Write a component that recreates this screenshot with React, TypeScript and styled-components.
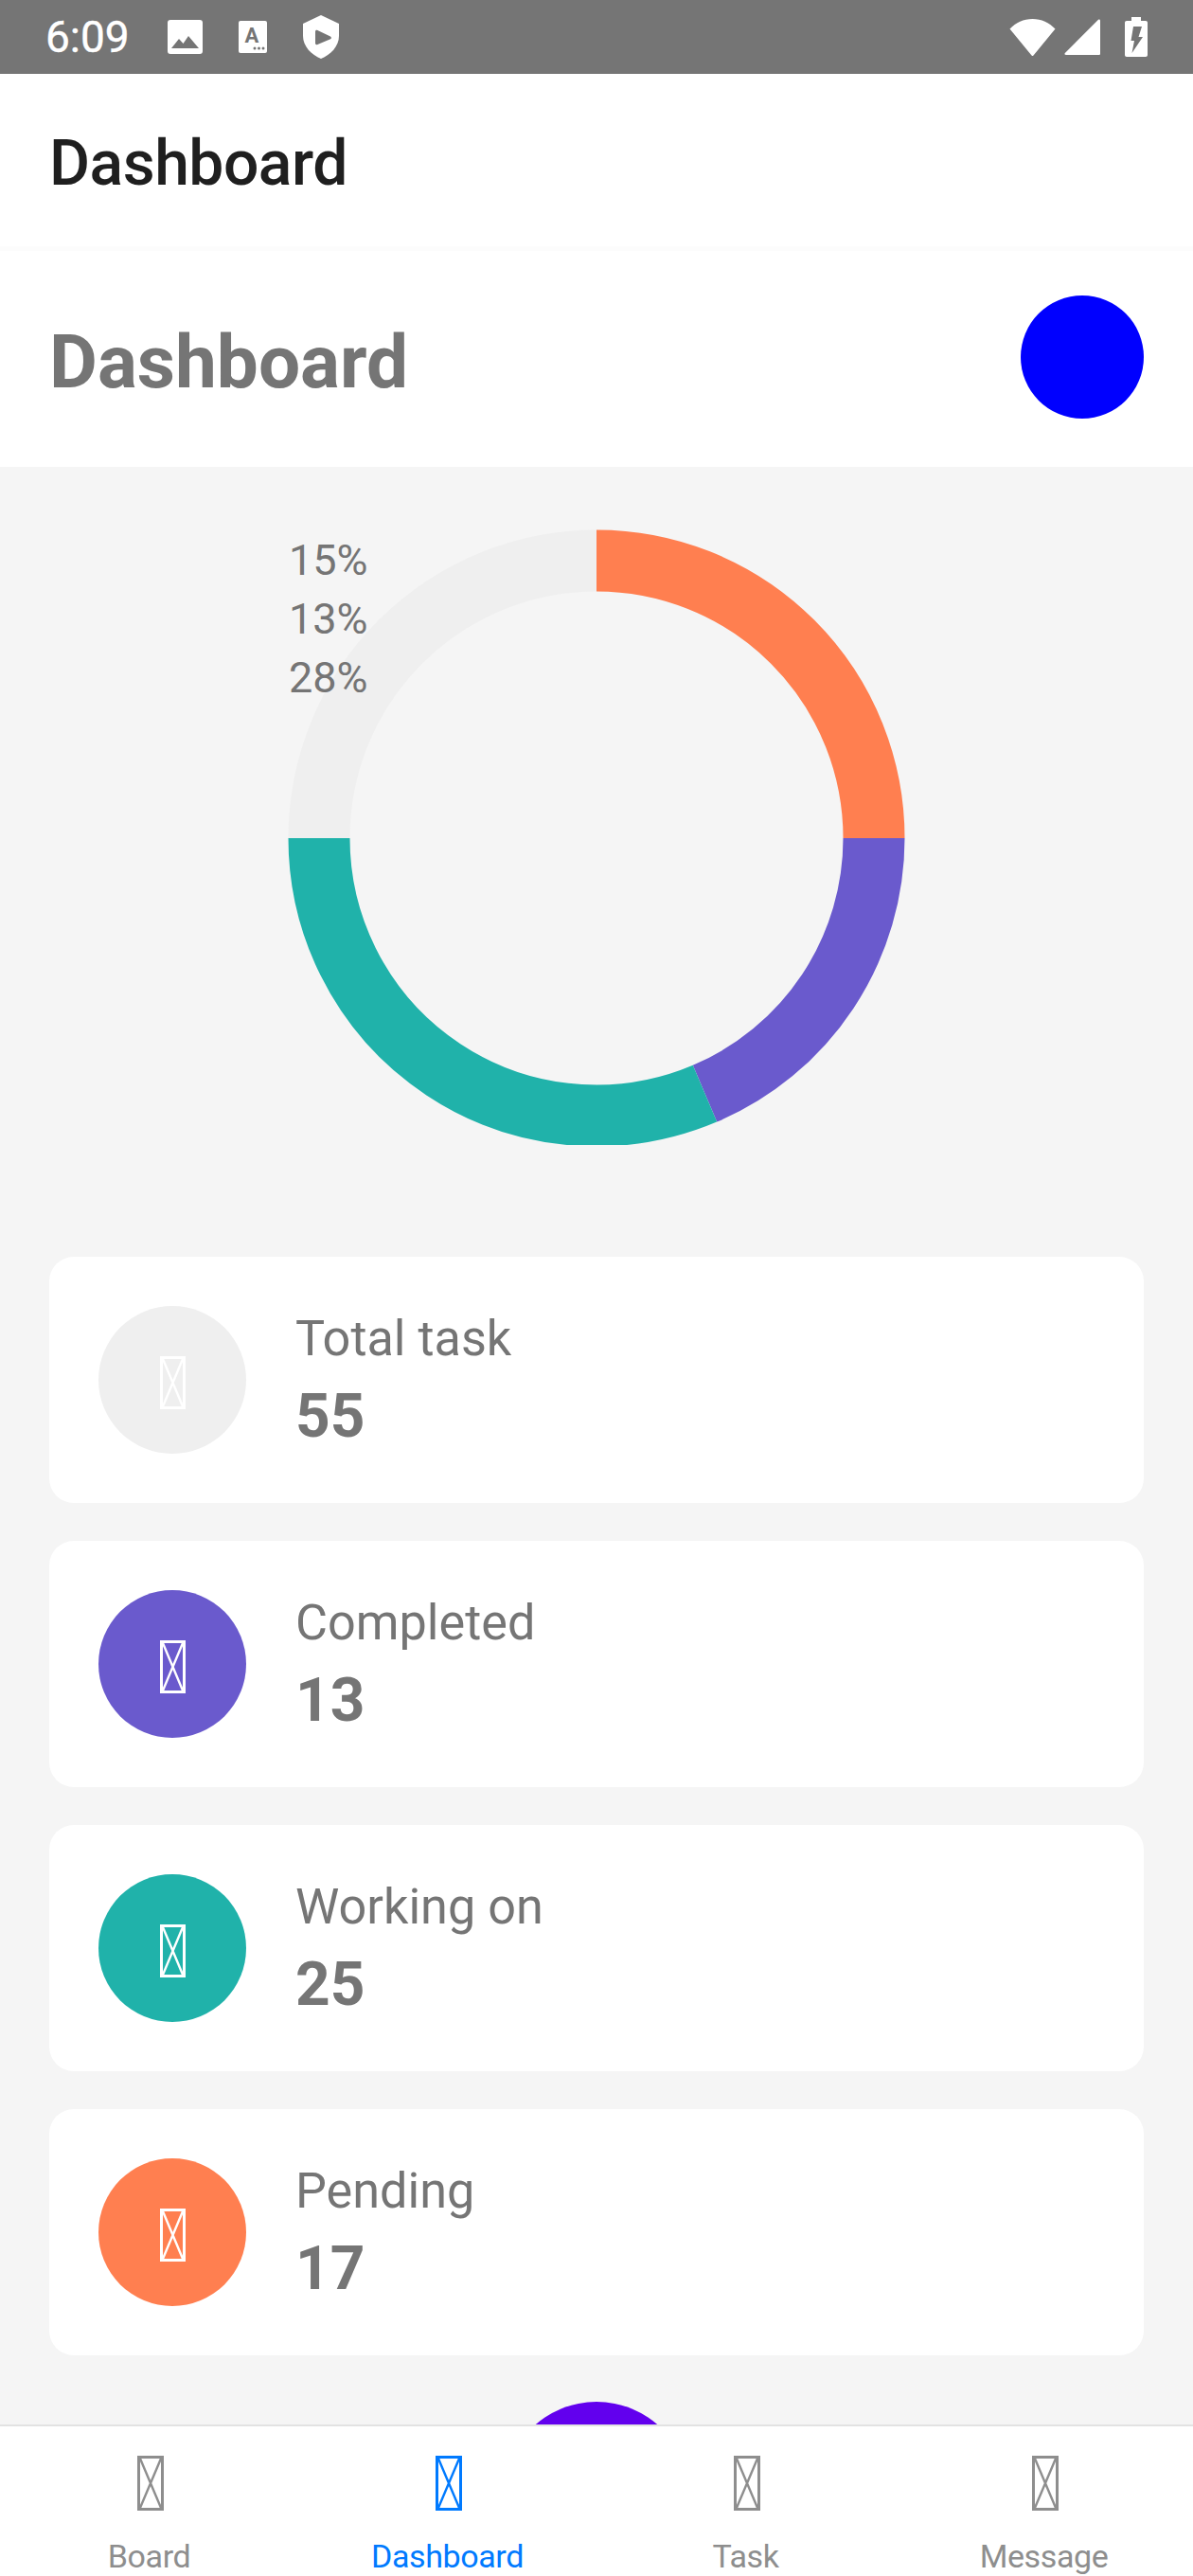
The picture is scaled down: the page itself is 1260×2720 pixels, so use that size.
import React from "react";
import styled, { createGlobalStyle } from "styled-components";

const GlobalStyle = createGlobalStyle`
  html, body { margin: 0; padding: 0; background: #fff; }
  body { font-family: Roboto, "Liberation Sans", sans-serif; }
  * { box-sizing: border-box; }
`;

const Screen = styled.div`
  width: 1260px;
  height: 2720px;
  display: flex;
  flex-direction: column;
  overflow: hidden;
  background: #f5f5f5;
`;

const StatusBar = styled.div`
  height: 78px;
  flex: none;
  display: flex;
  align-items: center;
  padding: 0 48px;
  background: #757575;
  color: #fff;
`;

const Time = styled.span`
  font-size: 46px;
  line-height: 78px;
  width: 87px;
  margin-right: 42px;
  -webkit-text-stroke: 0.4px #fff;
`;

const StatusIcons = styled.div`
  display: flex;
  align-items: center;
  gap: 38px;
`;

const SystemIcons = styled.div`
  margin-left: auto;
  display: flex;
  align-items: center;
  gap: 9px;
`;

const BatteryIcon = styled.svg`
  margin-left: 17px;
  margin-top: -1px;
`;

const AppHeader = styled.header`
  height: 182px;
  flex: none;
  display: flex;
  align-items: center;
  padding: 7px 0 0 52px;
  background: #fff;
`;

const AppTitle = styled.h1`
  margin: 0;
  font-size: 66px;
  font-weight: 500;
  letter-spacing: -0.5px;
  color: #1f1f1f;
  line-height: 80px;
`;

const HeaderShadow = styled.div`
  height: 5px;
  flex: none;
  background: #fcfcfc;
`;

const Hero = styled.section`
  height: 228px;
  flex: none;
  display: flex;
  align-items: center;
  justify-content: space-between;
  padding: 0 52px;
  background: #fff;
`;

const HeroTitle = styled.h2`
  margin: 6px 0 0;
  font-size: 78.3px;
  font-weight: 700;
  color: #757575;
  line-height: 90px;
`;

const Avatar = styled.div`
  width: 130px;
  height: 130px;
  margin-bottom: 4px;
  border-radius: 50%;
  background: #0000ff;
`;

const Main = styled.main`
  position: relative;
  flex: 1;
  min-height: 0;
  overflow: hidden;
`;

const ChartBox = styled.div`
  position: relative;
  width: 652px;
  height: 650px;
  margin: 66px auto 118px;
  overflow: hidden;
`;

const Donut = styled.svg`
  display: block;
`;

const Percentages = styled.div`
  position: absolute;
  left: 1px;
  top: 2px;
  display: flex;
  flex-direction: column;
  font-size: 45px;
  line-height: 62px;
  color: #757575;
`;

const CardList = styled.div`
  display: flex;
  flex-direction: column;
  gap: 40px;
  padding: 0 52px;
`;

const Card = styled.article`
  height: 260px;
  display: flex;
  align-items: center;
  gap: 52px;
  padding-left: 52px;
  border-radius: 26px;
  background: #fff;
`;

const CardBadge = styled.div<{ $color: string }>`
  width: 156px;
  height: 156px;
  flex: none;
  display: flex;
  align-items: center;
  justify-content: center;
  border-radius: 50%;
  background: ${(p) => p.$color};
  color: #fff;
`;

const CardGlyph = styled.span`
  display: flex;
  margin-top: 6px;
`;

const CardText = styled.div`
  display: flex;
  flex-direction: column;
  padding-bottom: 3px;
  color: #757575;
`;

const CardLabel = styled.span`
  font-size: 52.2px;
  line-height: 80px;
`;

const CardValue = styled.strong`
  font-size: 64px;
  font-weight: 700;
  line-height: 83px;
`;

const Fab = styled.div`
  position: absolute;
  left: 532px;
  bottom: -172px;
  width: 196px;
  height: 196px;
  border-radius: 50%;
  background: #6200ee;
`;

const TabBar = styled.nav`
  height: 160px;
  flex: none;
  display: grid;
  grid-template-columns: repeat(4, 1fr);
  border-top: 2px solid #e2e2e2;
  background: #fff;
`;

const Tab = styled.div<{ $active?: boolean }>`
  display: flex;
  flex-direction: column;
  align-items: center;
  padding: 31px 0 0 2px;
  color: ${(p) => (p.$active ? "#007aff" : "#8e8e8e")};
`;

const TabLabel = styled.span`
  margin: 28px 0 0 -2px;
  font-size: 34px;
  letter-spacing: -0.4px;
  line-height: 41px;
`;

const Tofu = ({ width, height, stroke }: { width: number; height: number; stroke: number }) => {
  const i = stroke / 2;
  return (
    <svg width={width} height={height} viewBox={`0 0 ${width} ${height}`} fill="none" stroke="currentColor" strokeWidth={stroke}>
      <rect x={i} y={i} width={width - stroke} height={height - stroke} />
      <path d={`M${stroke} ${stroke}L${width - stroke} ${height - stroke}M${width - stroke} ${stroke}L${stroke} ${height - stroke}`} strokeWidth={stroke * 0.8} />
    </svg>
  );
};

const R = 293;
const CX = 326;
const CY = 326;
const polar = (deg: number) => {
  const a = ((deg - 90) * Math.PI) / 180;
  return [CX + R * Math.cos(a), CY + R * Math.sin(a)];
};
const arc = (from: number, to: number) => {
  const [x1, y1] = polar(from);
  const [x2, y2] = polar(to);
  return `M${x1} ${y1}A${R} ${R} 0 ${to - from > 180 ? 1 : 0} 1 ${x2} ${y2}`;
};

const segments = [
  { from: 270, to: 360, color: "#efefef" },
  { from: 0, to: 90, color: "#ff7f50" },
  { from: 90, to: 157, color: "#6a5acd" },
  { from: 157, to: 270, color: "#20b2aa" },
];

const cards = [
  { label: "Total task", value: 55, color: "#efefef" },
  { label: "Completed", value: 13, color: "#6a5acd" },
  { label: "Working on", value: 25, color: "#20b2aa" },
  { label: "Pending", value: 17, color: "#ff7f50" },
];

const tabs = ["Board", "Dashboard", "Task", "Message"];

export default function App() {
  return (
    <Screen>
      <GlobalStyle />
      <StatusBar>
        <Time>6:09</Time>
        <StatusIcons>
          <svg width="37" height="36" viewBox="0 0 37 36">
            <rect width="37" height="36" rx="3" fill="#fff" />
            <path d="M4 30L12 20L16.5 25L22 17L33 30Z" fill="#757575" />
          </svg>
          <svg width="30" height="34" viewBox="0 0 30 34">
            <rect width="30" height="34" rx="2" fill="#fff" />
            <text x="14" y="23" fontFamily="Roboto, sans-serif" fontSize="22" fontWeight="700" textAnchor="middle" fill="#757575">A</text>
            <circle cx="17" cy="29" r="1.5" fill="#757575" />
            <circle cx="21.5" cy="29" r="1.5" fill="#757575" />
            <circle cx="26" cy="29" r="1.5" fill="#757575" />
          </svg>
          <svg width="38" height="46" viewBox="0 0 38 46">
            <path d="M19 0L38 9V22C38 33 29 42 19 46C9 42 0 33 0 22V9Z" fill="#fff" />
            <path d="M13 17.5C13 16 14.2 15.4 15.4 16.1L29 22.5C30.2 23.2 30.2 24.6 29 25.3L15.4 31C14.2 31.6 13 31 13 29.5Z" fill="#757575" />
          </svg>
        </StatusIcons>
        <SystemIcons>
          <svg width="49" height="39" viewBox="0 0 49 39">
            <path d="M0.5 10.5C7 4 15 0 24.5 0C34 0 42 4 48.5 10.5L25.5 38.5C25 39.2 24 39.2 23.5 38.5Z" fill="#fff" />
          </svg>
          <svg width="38" height="38" viewBox="0 0 38 38">
            <path d="M36 .8C37 0 38 .5 38 2V36.5C38 37.5 37.5 38 36.5 38H2C.5 38 0 37 .8 36Z" fill="#fff" />
          </svg>
          <BatteryIcon width="24" height="42" viewBox="0 0 24 42">
            <path d="M7 0H17V4H22C23.2 4 24 4.8 24 6V40C24 41.2 23.2 42 22 42H2C.8 42 0 41.2 0 40V6C0 4.8 .8 4 2 4H7Z" fill="#fff" />
            <path d="M9 10H18L14.5 21H19L7.5 38L10 25H6.5Z" fill="#757575" />
          </BatteryIcon>
        </SystemIcons>
      </StatusBar>

      <AppHeader>
        <AppTitle>Dashboard</AppTitle>
      </AppHeader>
      <HeaderShadow />

      <Hero>
        <HeroTitle>Dashboard</HeroTitle>
        <Avatar />
      </Hero>

      <Main>
        <ChartBox>
          <Donut width="652" height="652" viewBox="0 0 652 652" fill="none" strokeWidth="65">
            {segments.map((s) => (
              <path key={s.from} d={arc(s.from, s.to)} stroke={s.color} />
            ))}
          </Donut>
          <Percentages>
            <span>15%</span>
            <span>13%</span>
            <span>28%</span>
          </Percentages>
        </ChartBox>

        <CardList>
          {cards.map((c) => (
            <Card key={c.label}>
              <CardBadge $color={c.color}>
                <CardGlyph>
                  <Tofu width={27} height={56} stroke={3} />
                </CardGlyph>
              </CardBadge>
              <CardText>
                <CardLabel>{c.label}</CardLabel>
                <CardValue>{c.value}</CardValue>
              </CardText>
            </Card>
          ))}
        </CardList>
        <Fab />
      </Main>

      <TabBar>
        {tabs.map((t) => (
          <Tab key={t} $active={t === "Dashboard"}>
            <Tofu width={28} height={58} stroke={3} />
            <TabLabel>{t}</TabLabel>
          </Tab>
        ))}
      </TabBar>
    </Screen>
  );
}
